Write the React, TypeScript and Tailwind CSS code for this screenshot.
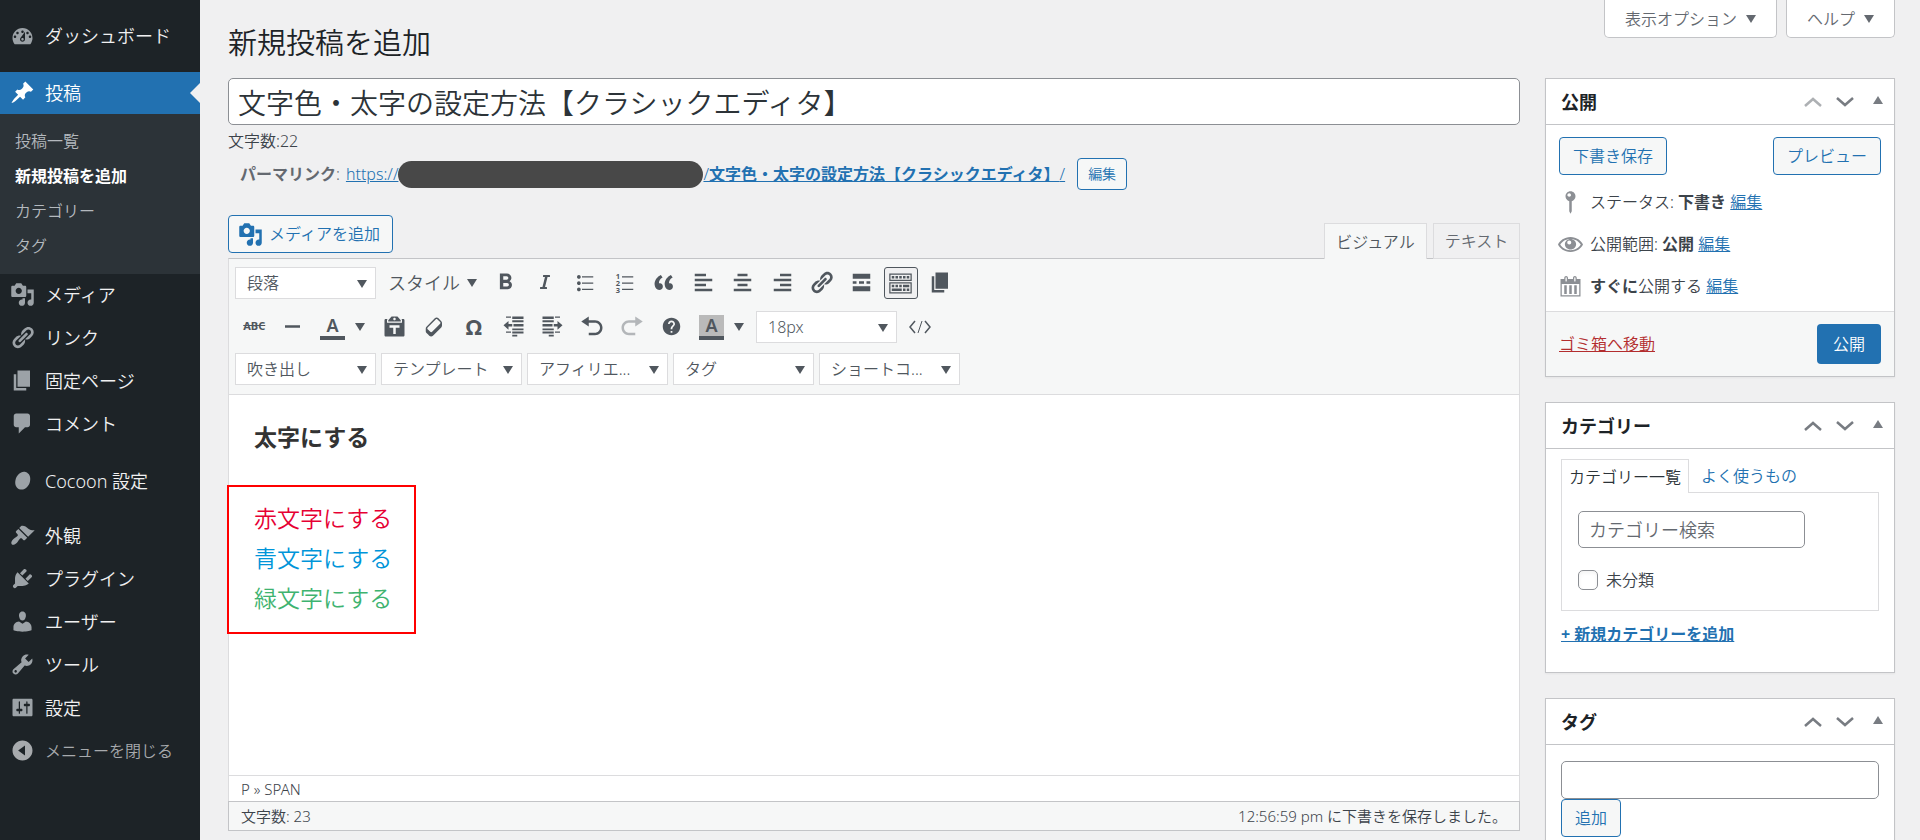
import type { ReactNode } from "react"
import { MdFormatBold, MdHelp } from "react-icons/md"
import { FaItalic } from "react-icons/fa"

const paths = {
    dashboard: "M3.76 17h12.48c1.09-1.36 1.76-3.11 1.76-5 0-4.42-3.58-8-8-8s-8 3.58-8 8c0 1.89.67 3.64 1.76 5zM10 6c.55 0 1 .45 1 1s-.45 1-1 1-1-.45-1-1 .45-1 1-1zM6 7c.55 0 1 .45 1 1s-.45 1-1 1-1-.45-1-1 .45-1 1-1zm8 0c.55 0 1 .45 1 1s-.45 1-1 1-1-.45-1-1 .45-1 1-1zm-5.37 4.55L12 7v6c0 1.1-.9 2-2 2s-2-.9-2-2c0-.57.24-1.08.63-1.45zM4 10c.55 0 1 .45 1 1s-.45 1-1 1-1-.45-1-1 .45-1 1-1zm12 0c.55 0 1 .45 1 1s-.45 1-1 1-1-.45-1-1 .45-1 1-1zm-5 3c0-.55-.45-1-1-1s-1 .45-1 1 .45 1 1 1 1-.45 1-1z",
    pin: "M10.44 3.02l1.82-1.82 6.36 6.35-1.83 1.82c-1.05-.68-2.48-.57-3.41.36l-.75.75c-.92.93-1.04 2.35-.35 3.41l-1.83 1.82-2.41-2.41-2.8 2.79c-.42.42-3.38 2.71-3.8 2.29s1.86-3.39 2.28-3.81l2.79-2.79L4.1 9.36l1.83-1.82c1.05.69 2.48.57 3.4-.36l.75-.75c.93-.92 1.05-2.35.36-3.41z",
    media: "M13 11V4c0-.55-.45-1-1-1h-1.67L9 1H5L3.67 3H2c-.55 0-1 .45-1 1v7c0 .55.45 1 1 1h10c.55 0 1-.45 1-1zM7 4.5c1.38 0 2.5 1.12 2.5 2.5S8.38 9.5 7 9.5 4.5 8.38 4.5 7 5.62 4.5 7 4.5zM14 6h5v10.5c0 1.38-1.12 2.5-2.5 2.5S14 17.88 14 16.5s1.12-2.5 2.5-2.5c.17 0 .34.02.5.05V9h-3V6zm-4 8.05V13h2v3.5c0 1.38-1.12 2.5-2.5 2.5S7 17.88 7 16.5 8.12 14 9.5 14c.17 0 .34.02.5.05z",
    link: "M17.74 2.76c1.68 1.69 1.68 4.41 0 6.1l-1.53 1.52c-1.12 1.12-2.7 1.47-4.14 1.09l2.62-2.61.76-.77.76-.76c.84-.84.84-2.2 0-3.04-.84-.85-2.2-.85-3.04 0l-.77.76-3.38 3.38c-.37-1.44-.02-3.02 1.1-4.14l1.52-1.53c1.69-1.68 4.42-1.68 6.1 0zM8.59 13.43l5.34-5.34c.42-.42.42-1.1 0-1.52-.44-.43-1.13-.39-1.53 0l-5.33 5.34c-.42.42-.42 1.1 0 1.52.44.43 1.13.39 1.52 0zm-.76 2.29l4.14-4.15c.38 1.44.03 3.02-1.09 4.14l-1.52 1.53c-1.69 1.68-4.41 1.68-6.1 0-1.68-1.68-1.68-4.42 0-6.1l1.53-1.52c1.12-1.12 2.7-1.47 4.14-1.1l-4.14 4.15c-.85.84-.85 2.2 0 3.05.84.84 2.2.84 3.04 0z",
    page: "M6 15V2h10v13H6zm-1 1h8v2H3V5h2v11z",
    comment: "M5 2h9c1.1 0 2 .9 2 2v7c0 1.1-.9 2-2 2h-2l-5 5v-5H5c-1.1 0-2-.9-2-2V4c0-1.1.9-2 2-2z",
    cocoon: "M12.5 3.2c3 1 4.3 4 3.5 7.5-.9 4-4.1 7.1-7.5 6.5-3.3-.6-5-4-4.1-7.7.9-3.9 4.5-7.4 8.1-6.3z",
    appearance: "M14.48 11.06L7.41 3.99l1.5-1.5c.5-.56 2.3-.47 3.51.32 1.21.8 1.43 1.28 2.91 2.1 1.18.64 2.45 1.26 4.45.85zm-.71.71L6.7 4.7 4.93 6.47c-.39.39-.39 1.02 0 1.41l1.06 1.06c.39.39.39 1.03 0 1.42-.6.6-1.43 1.11-2.21 1.69-.35.26-.7.53-1.01.84C1.43 14.23.4 16.08 1.4 17.07c.99 1 2.84-.03 4.18-1.36.31-.31.58-.66.85-1.02.57-.78 1.08-1.61 1.69-2.21.39-.39 1.02-.39 1.41 0l1.06 1.06c.39.39 1.02.39 1.41 0z",
    plugins: "M13.11 4.36L9.87 7.6 8 5.73l3.24-3.24c.35-.34 1.05-.2 1.56.32.52.51.66 1.21.31 1.55zm-8 1.77l.91-1.12 9.01 9.01-1.19.84c-.71.71-2.63 1.16-3.82 1.16H6.14L4.9 17.26c-.59.59-1.54.59-2.12 0-.59-.58-.59-1.53 0-2.12l1.24-1.24v-3.88c0-1.13.4-3.19 1.09-3.89zm7.26 3.97l3.24-3.24c.34-.35 1.04-.21 1.55.31.52.51.66 1.21.31 1.55l-3.24 3.25z",
    users: "M10 9.25c-2.27 0-2.73-3.44-2.73-3.44C7 4.02 7.82 2 9.97 2c2.16 0 2.98 2.02 2.71 3.81 0 0-.41 3.44-2.68 3.44zm0 2.57L12.72 10c2.39 0 4.52 2.33 4.52 4.53v2.49s-3.65 1.13-7.24 1.13c-3.65 0-7.24-1.13-7.24-1.13v-2.49c0-2.25 1.94-4.48 4.47-4.48z",
    tools: "M16.68 9.77c-1.34 1.34-3.3 1.67-4.95.99l-5.41 6.52c-.99.99-2.59.99-3.58 0s-.99-2.59 0-3.57l6.52-5.42c-.68-1.65-.35-3.61.99-4.95 1.28-1.28 3.12-1.62 4.72-1.06l-2.89 2.89 2.82 2.82 2.86-2.87c.53 1.58.18 3.39-1.08 4.65zM3.81 16.21c.4.39 1.04.39 1.43 0 .4-.4.4-1.04 0-1.43-.39-.4-1.03-.4-1.43 0-.39.39-.39 1.03 0 1.43z",
    settings: "M18 16V4c0-.55-.45-1-1-1H3c-.55 0-1 .45-1 1v12c0 .55.45 1 1 1h14c.55 0 1-.45 1-1zM8 11h1c.55 0 1 .45 1 1s-.45 1-1 1H8v1.5c0 .28-.22.5-.5.5s-.5-.22-.5-.5V13H6c-.55 0-1-.45-1-1s.45-1 1-1h1V5.5c0-.28.22-.5.5-.5s.5.22.5.5V11zm5-2h-1c-.55 0-1-.45-1-1s.45-1 1-1h1V5.5c0-.28.22-.5.5-.5s.5.22.5.5V7h1c.55 0 1 .45 1 1s-.45 1-1 1h-1v5.5c0 .28-.22.5-.5.5s-.5-.22-.5-.5V9z",
    collapse: "M10 2c4.42 0 8 3.58 8 8s-3.58 8-8 8-8-3.58-8-8 3.58-8 8-8zM12 6l-5.5 4L12 14z",
    ul: "M5.5 7C4.67 7 4 6.33 4 5.5 4 4.68 4.67 4 5.5 4 6.32 4 7 4.68 7 5.5 7 6.33 6.32 7 5.5 7zM8 5h9v1H8V5zm-2.5 7c-.83 0-1.5-.67-1.5-1.5C4 9.68 4.67 9 5.5 9c.82 0 1.5.68 1.5 1.5 0 .83-.68 1.5-1.5 1.5zM8 10h9v1H8v-1zm-2.5 7c-.83 0-1.5-.67-1.5-1.5 0-.82.67-1.5 1.5-1.5.82 0 1.5.68 1.5 1.5 0 .83-.68 1.5-1.5 1.5zM8 15h9v1H8v-1z",
    quote: "M9.49 13.22c0-.74-.2-1.38-.61-1.9-.62-.78-1.83-.88-2.53-.72-.29-1.65 1.11-3.75 2.92-4.65L7.88 4c-2.73 1.3-5.42 4.28-4.96 8.05C3.21 14.43 4.59 16 6.54 16c.85 0 1.56-.25 2.12-.75s.83-1.18.83-2.03zm8.05 0c0-.74-.2-1.38-.61-1.9-.63-.78-1.83-.88-2.53-.72-.29-1.65 1.11-3.75 2.92-4.65L15.93 4c-2.73 1.3-5.41 4.28-4.95 8.05.29 2.38 1.66 3.95 3.61 3.95.85 0 1.56-.25 2.12-.75s.83-1.18.83-2.03z",
    alignLeft: "M12 5V3H3v2h9zm5 4V7H3v2h14zm-5 4v-2H3v2h9zm5 4v-2H3v2h14z",
    alignCenter: "M14 5V3H6v2h8zm3 4V7H3v2h14zm-3 4v-2H6v2h8zm3 4v-2H3v2h14z",
    alignRight: "M17 5V3H8v2h9zm0 4V7H3v2h14zm0 4v-2H8v2h9zm0 4v-2H3v2h14z",
    more: "M17 7V3H3v4h14zM6 11V9H3v2h3zm6 0V9H8v2h4zm5 0V9h-3v2h3zm0 6v-4H3v4h14z",
    kitchensink: "M19 2v6H1V2h18zm-1 5V3H2v4h16zM5 4v2H3V4h2zm3 0v2H6V4h2zm3 0v2H9V4h2zm3 0v2h-2V4h2zm3 0v2h-2V4h2zm2 5v9H1V9h18zm-1 8v-7H2v7h16zM5 11v2H3v-2h2zm3 0v2H6v-2h2zm3 0v2H9v-2h2zm6 0v2h-5v-2h5zm-6 3v2H3v-2h8zm3 0v2h-2v-2h2zm3 0v2h-2v-2h2z",
    hr: "M4 9h12v2H4z",
    paste: "M12.38 2L15 5v1H5V5l2.64-3h4.74zM10 5c.55 0 1-.44 1-1 0-.55-.45-1-1-1s-1 .45-1 1c0 .56.45 1 1 1zm5.45-1H17c.55 0 1 .45 1 1v12c0 .56-.45 1-1 1H3c-.55 0-1-.44-1-1V5c0-.55.45-1 1-1h1.55L4 4.63V7h12V4.63zM14 11V9H6v2h3v5h2v-5h3z",
    eraser: "M14.29 4.59l1.1 1.11c.41.4.61.94.61 1.47v2.12c0 .53-.2 1.07-.61 1.47l-6.63 6.63c-.4.41-.94.61-1.47.61s-1.07-.2-1.47-.61l-1.11-1.1-1.1-1.11c-.41-.4-.61-.94-.61-1.47v-2.12c0-.54.2-1.07.61-1.48l6.63-6.62c.4-.41.94-.61 1.47-.61s1.06.2 1.47.61zm-6.21 9.7l6.42-6.42c.39-.39.39-1.03 0-1.43L12.36 4.3c-.19-.19-.45-.29-.72-.29s-.52.1-.71.29l-6.42 6.42c-.39.4-.39 1.04 0 1.43l2.14 2.14c.38.38 1.04.38 1.43 0z",
    outdent: "M4 2h4v1H4zM9 2h9v2H9zM9 5h9v1.5H9zM10 8h8v2h-8zM9 11.5h9V13H9zM4 14h4v1H4zM9 14h9v1.5H9zM9 16.5h4V18H9zM6 5.5V8h3v2H6v2.5L2 9z",
    indent: "M12 2h4v1h-4zM2 2h9v2H2zM2 5h9v1.5H2zM2 8h8v2H2zM2 11.5h9V13H2zM12 14h4v1h-4zM2 14h9v1.5H2zM7 16.5h4V18H7zM14 5.5V8h-3v2h3v2.5L18 9z",
    undo: "M12 5H7V2L1 6l6 4V7h5c2.2 0 4 1.8 4 4s-1.8 4-4 4H7v2h5c3.3 0 6-2.7 6-6s-2.7-6-6-6z",
    redo: "M8 5h5V2l6 4-6 4V7H8c-2.2 0-4 1.8-4 4s1.8 4 4 4h5v2H8c-3.3 0-6-2.7-6-6s2.7-6 6-6z",
    status: "M10 1c2.2 0 4 1.8 4 4 0 1.9-1.3 3.4-3 3.9V17l-1 2-1-2V8.9C7.3 8.4 6 6.9 6 5c0-2.2 1.8-4 4-4zM9 2.5C8.2 2.5 7.5 3.2 7.5 4S8.2 5.3 9 5.3 10.4 4.8 10.4 4 9.8 2.5 9 2.5z",
    eye: "M10 4c5 0 8.5 3 10 6-1.5 3-5 6-10 6S1.5 13 0 10c1.5-3 5-6 10-6zM10 5.5c-3.8 0-6.7 1.9-8.2 4.5 1.5 2.6 4.4 4.5 8.2 4.5s6.7-1.9 8.2-4.5C16.7 7.4 13.8 5.5 10 5.5zM10 5.5c2.5 0 4.5 1.9 4.5 4.3S12.5 14 10 14s-4.5-1.9-4.5-4.2 2-4.3 4.5-4.3zM9 6.8c-.9 0-1.6.7-1.6 1.6S8.1 10 9 10s1.6-.7 1.6-1.6S9.9 6.8 9 6.8z",
    calendar: "M15 4h3v14H2V4h3V3c0-.83.67-1.5 1.5-1.5S8 2.17 8 3v1h4V3c0-.83.67-1.5 1.5-1.5S15 2.17 15 3v1zM6 3v2.5c0 .28.22.5.5.5s.5-.22.5-.5V3c0-.28-.22-.5-.5-.5S6 2.72 6 3zm7 0v2.5c0 .28.22.5.5.5s.5-.22.5-.5V3c0-.28-.22-.5-.5-.5s-.5.22-.5.5zm4 14V8H3v9h14zM7 16V9H5v7h2zm4 0V9H9v7h2zm4 0V9h-2v7h2z",
}

type IconName = keyof typeof paths

function Icon({ name }: { name: IconName }) {
    return (
        <svg viewBox="0 0 20 20" className="w-[25px] h-[25px] shrink-0" fill="currentColor" fillRule="evenodd" aria-hidden="true">
            <path d={paths[name]} />
        </svg>
    )
}

function Caret({ className = "" }: { className?: string }) {
    return (
        <svg viewBox="0 0 10 8" className={"w-[10px] h-[8px] shrink-0 " + className} fill="currentColor" aria-hidden="true">
            <path d="M0 0h10L5 8z" />
        </svg>
    )
}

// ---------- Sidebar ----------

function MenuItem({ icon, label }: { icon: IconName; label: string }) {
    return (
        <a href="#" className="flex items-center h-[43px] text-[#f0f0f1] text-[18px]">
            <span className="w-[45px] pb-[2px] flex justify-center text-[#9ca2a7]"><Icon name={icon} /></span>
            {label}
        </a>
    )
}

function Sidebar() {
    return (
        <nav className="w-[200px] shrink-0 bg-[#1d2327] pt-[15px]">
            <MenuItem icon="dashboard" label="ダッシュボード" />
            <a href="#" className="relative mt-[14px] flex items-center h-[42px] bg-[#2271b1] text-white text-[18px]">
                <span className="w-[45px] pb-[2px] flex justify-center"><Icon name="pin" /></span>
                投稿
                <span className="absolute right-0 top-[11px] border-y-[10px] border-y-transparent border-r-[10px] border-r-[#f0f0f1]"></span>
            </a>
            <div className="bg-[#2c3338] py-[10px] pl-[15px] text-base leading-[35px] text-[#b4b9be]">
                <a href="#" className="block">投稿一覧</a>
                <a href="#" className="block font-bold text-white">新規投稿を追加</a>
                <a href="#" className="block">カテゴリー</a>
                <a href="#" className="block">タグ</a>
            </div>
            <MenuItem icon="media" label="メディア" />
            <MenuItem icon="link" label="リンク" />
            <MenuItem icon="page" label="固定ページ" />
            <MenuItem icon="comment" label="コメント" />
            <div className="pt-[14px] pb-3">
                <MenuItem icon="cocoon" label="Cocoon 設定" />
            </div>
            <MenuItem icon="appearance" label="外観" />
            <MenuItem icon="plugins" label="プラグイン" />
            <MenuItem icon="users" label="ユーザー" />
            <MenuItem icon="tools" label="ツール" />
            <MenuItem icon="settings" label="設定" />
            <button className="flex items-center h-[42px] text-base text-[#a7aaad]">
                <span className="w-[45px] pb-[2px] flex justify-center"><Icon name="collapse" /></span>
                メニューを閉じる
            </button>
        </nav>
    )
}

// ---------- Editor ----------

function ToolButton({ label, active, children }: { label: string; active?: boolean; children: ReactNode }) {
    return (
        <button aria-label={label} className={active
            ? "justify-self-center w-[34px] h-8 flex items-center justify-center rounded-[3px] border border-[#50575e] bg-[#f0f0f1]"
            : "justify-self-center w-[34px] h-8 pb-[2px] flex items-center justify-center"}>
            {children}
        </button>
    )
}

function ToolSelect({ label, value }: { label: string; value: string }) {
    return (
        <div className="relative w-[141px]">
            <select aria-label={label} className="appearance-none block w-full h-8 pl-[11px] pr-6 bg-white border border-[#dcdcde] text-base leading-[30px] text-[#50575e]">
                <option>{value}</option>
            </select>
            <Caret className="absolute right-[9px] top-[13px]" />
        </div>
    )
}

function ColorButton({ label, shaded }: { label: string; shaded?: boolean }) {
    return (
        <div className="w-[63px] flex items-center gap-[10px] pl-2">
            <button aria-label={label} className={shaded
                ? "w-[25px] h-[25px] bg-[#bababa] border-b-4 border-[#50575e] text-[18px] leading-[21px] font-semibold"
                : "w-[25px] h-[25px] border-b-4 border-[#50575e] text-[18px] leading-[21px] font-semibold"}>
                A
            </button>
            <Caret />
        </div>
    )
}

function OrderedListIcon() {
    return (
        <svg viewBox="0 0 20 20" className="w-[25px] h-[25px]" fill="currentColor" aria-hidden="true">
            <path d="M8 5h9v1H8zM8 10h9v1H8zM8 15h9v1H8z" />
            <text x="3" y="7" fontSize="6" fontWeight="700">1</text>
            <text x="3" y="12.5" fontSize="6" fontWeight="700">2</text>
            <text x="3" y="18" fontSize="6" fontWeight="700">3</text>
        </svg>
    )
}

function Toolbar() {
    return (
        <div className="bg-[#f6f7f7] border-b border-[#dcdcde] px-[6px] pt-2 pb-[9px] text-[#50575e]">
            <div className="flex items-center">
                <ToolSelect label="段落" value="段落" />
                <button className="flex items-center justify-between w-[89px] ml-3 mr-[9px] text-[18px]">
                    スタイル <Caret />
                </button>
                <div className="grid grid-cols-12 w-[474px]">
                    <ToolButton label="太字"><MdFormatBold className="w-[27px] h-[27px]" /></ToolButton>
                    <ToolButton label="イタリック"><FaItalic className="w-[16px] h-[16px]" /></ToolButton>
                    <ToolButton label="番号なしリスト"><Icon name="ul" /></ToolButton>
                    <ToolButton label="番号付きリスト"><OrderedListIcon /></ToolButton>
                    <ToolButton label="引用"><Icon name="quote" /></ToolButton>
                    <ToolButton label="左寄せ"><Icon name="alignLeft" /></ToolButton>
                    <ToolButton label="中央揃え"><Icon name="alignCenter" /></ToolButton>
                    <ToolButton label="右寄せ"><Icon name="alignRight" /></ToolButton>
                    <ToolButton label="リンク"><Icon name="link" /></ToolButton>
                    <ToolButton label="続きを読む"><Icon name="more" /></ToolButton>
                    <ToolButton label="ツールバー切り替え" active><Icon name="kitchensink" /></ToolButton>
                    <ToolButton label="改ページ"><Icon name="page" /></ToolButton>
                </div>
            </div>
            <div className="flex items-center mt-3">
                <div className="grid grid-cols-2 w-[77px]">
                    <ToolButton label="打ち消し"><span className="text-[11px] font-bold line-through">ABC</span></ToolButton>
                    <ToolButton label="横ライン"><Icon name="hr" /></ToolButton>
                </div>
                <ColorButton label="テキスト色" />
                <div className="grid grid-cols-8 w-[316px]">
                    <ToolButton label="テキストとしてペースト"><Icon name="paste" /></ToolButton>
                    <ToolButton label="書式設定をクリア"><Icon name="eraser" /></ToolButton>
                    <ToolButton label="特殊文字"><span className="text-[22px] font-bold">Ω</span></ToolButton>
                    <ToolButton label="インデントを減らす"><Icon name="outdent" /></ToolButton>
                    <ToolButton label="インデントを増やす"><Icon name="indent" /></ToolButton>
                    <ToolButton label="取り消し"><Icon name="undo" /></ToolButton>
                    <ToolButton label="やり直し"><span className="opacity-40"><Icon name="redo" /></span></ToolButton>
                    <ToolButton label="ヘルプ"><MdHelp className="w-[21px] h-[21px]" /></ToolButton>
                </div>
                <ColorButton label="背景色" shaded />
                <div className="ml-[2px]"><ToolSelect label="フォントサイズ" value="18px" /></div>
                <button aria-label="コード" className="ml-[11px]">
                    <svg viewBox="0 0 24 16" className="w-[24px] h-[16px]" fill="none" stroke="currentColor" aria-hidden="true">
                        <path strokeWidth="1.5" d="M7 2L2 8l5 6M17 2l5 6-5 6" />
                        <path strokeWidth="1" d="M14 2l-4 12" />
                    </svg>
                </button>
            </div>
            <div className="flex gap-[5px] mt-[10px]">
                <ToolSelect label="吹き出し" value="吹き出し" />
                <ToolSelect label="テンプレート" value="テンプレート" />
                <ToolSelect label="アフィリエイト" value="アフィリエ..." />
                <ToolSelect label="タグ挿入" value="タグ" />
                <ToolSelect label="ショートコード" value="ショートコ..." />
            </div>
        </div>
    )
}

function Editor() {
    return (
        <section className="flex-1 min-w-0">
            <input type="text" aria-label="タイトル" defaultValue="文字色・太字の設定方法【クラシックエディタ】"
                className="block w-full h-[47px] px-[9px] bg-white border border-[#8c8f94] rounded-[5px] text-[28px] text-[#2c3338]" />
            <p className="mt-1 leading-6 text-base text-[#3c434a]">文字数:22</p>

            {/* Permalink */}
            <div className="flex items-center mt-[5px] h-8 px-3 text-base leading-6 text-[#646970]">
                <strong className="font-bold">パーマリンク</strong>
                <span className="mr-[6px]">:</span>
                <a href="#" className="flex items-center text-[#2271b1]">
                    <span className="underline">https://</span>
                    <span className="w-[305px] h-[27px] rounded-full bg-[#484848]"></span>
                    <span className="underline">/<b className="font-bold">文字色・太字の設定方法【クラシックエディタ】</b>/</span>
                </a>
                <button className="ml-3 h-8 px-[10px] rounded-[4px] border border-[#2271b1] bg-[#f6f7f7] text-sm text-[#2271b1]">編集</button>
            </div>

            <div className="flex items-end justify-between mt-[25px]">
                <button className="flex items-center gap-[6px] h-[38px] mb-[5px] pl-[9px] pr-3 rounded-[4px] border border-[#2271b1] bg-[#f6f7f7] text-base text-[#2271b1]">
                    <Icon name="media" />
                    メディアを追加
                </button>
                <div className="relative flex gap-[6px] -mb-px text-base text-[#50575e]">
                    <button className="h-9 w-[103px] border border-b-0 border-[#dcdcde] bg-[#f6f7f7]">ビジュアル</button>
                    <button className="h-9 w-[87px] border border-[#dcdcde] bg-[#f0f0f1] text-[#646970]">テキスト</button>
                </div>
            </div>

            <div className="border border-[#dcdcde] border-t-[#c3c4c7] border-b-0 bg-white">
                <Toolbar />
                <div className="min-h-[380px] pl-[25px] pt-[22px] text-[23px] leading-[40px] text-[#333]">
                    <p className="font-bold">太字にする</p>
                    <div className="relative mt-[41px] w-fit">
                        <p className="text-[#e60033]">赤文字にする</p>
                        <p className="text-[#0095d9]">青文字にする</p>
                        <p className="text-[#3eb370]">緑文字にする</p>
                        <div className="absolute -left-[27px] -right-[24px] -top-[13px] -bottom-[16px] border-2 border-[#ff0000]"></div>
                    </div>
                </div>
                <div className="h-[26px] border-t border-[#dcdcde] px-3 leading-[26px] text-[15px] text-[#3c434a]">P » SPAN</div>
            </div>
            <div className="flex justify-between h-[30px] border border-[#c3c4c7] bg-[#f6f7f7] px-3 leading-[28px] text-[15px] text-[#3c434a]">
                <span>文字数: 23</span>
                <span>12:56:59 pm に下書きを保存しました。</span>
            </div>
        </section>
    )
}

// ---------- Meta boxes ----------

function Box({ title, first, children }: { title: string; first?: boolean; children: ReactNode }) {
    return (
        <div className="mb-[25px] bg-white border border-[#c3c4c7] shadow-xs">
            <div className="flex items-center h-[46px] border-b border-[#c3c4c7] pl-[15px] pr-[11px] text-[#787c82]">
                <h2 className="flex-1 pt-[2px] text-[18px] font-bold text-[#1d2327]">{title}</h2>
                <button aria-label="上に移動" className={first ? "w-8 flex justify-center opacity-60" : "w-8 flex justify-center"}>
                    <svg viewBox="0 0 18 10" className="w-[18px] h-[10px]" fill="none" stroke="currentColor" strokeWidth="2.5" aria-hidden="true"><path d="M1 9l8-7 8 7" /></svg>
                </button>
                <button aria-label="下に移動" className="w-8 flex justify-center">
                    <svg viewBox="0 0 18 10" className="w-[18px] h-[10px]" fill="none" stroke="currentColor" strokeWidth="2.5" aria-hidden="true"><path d="M1 1l8 7 8-7" /></svg>
                </button>
                <button aria-label="パネルを閉じる" className="ml-3 pb-[3px]">
                    <Caret className="rotate-180" />
                </button>
            </div>
            {children}
        </div>
    )
}

const secondary = "h-[38px] px-[13px] rounded-[4px] border border-[#2271b1] bg-[#f6f7f7] text-base text-[#2271b1]"

function PublishRow({ icon, children }: { icon: IconName; children: ReactNode }) {
    return (
        <div className="flex items-center h-[42px]">
            <span className="mr-[7px] text-[#8c8f94]"><Icon name={icon} /></span>
            <span>{children} <a href="#" className="text-[#2271b1] underline">編集</a></span>
        </div>
    )
}

function Publish() {
    return (
        <Box title="公開" first>
            <div className="px-3 pt-3 pb-1 text-base text-[#3c434a]">
                <div className="flex justify-between mb-[6px] px-px">
                    <button className={secondary}>下書き保存</button>
                    <button className={secondary}>プレビュー</button>
                </div>
                <PublishRow icon="status">ステータス: <b className="font-bold">下書き</b></PublishRow>
                <PublishRow icon="eye">公開範囲: <b className="font-bold">公開</b></PublishRow>
                <PublishRow icon="calendar"><b className="font-bold">すぐに</b>公開する</PublishRow>
            </div>
            <div className="flex items-center justify-between border-t border-[#dcdcde] bg-[#f6f7f7] px-[13px] py-3 text-base">
                <a href="#" className="text-[#b32d2e] underline">ゴミ箱へ移動</a>
                <button className="h-[40px] px-4 rounded-[4px] bg-[#2271b1] text-white">公開</button>
            </div>
        </Box>
    )
}

function Categories() {
    return (
        <Box title="カテゴリー">
            <div className="px-[15px] pt-[10px] pb-[26px] text-base leading-6">
                <div className="flex relative -mb-px">
                    <button className="h-[34px] px-[7px] border border-b-0 border-[#dcdcde] bg-white text-[#2c3338]">カテゴリー一覧</button>
                    <a href="#" className="px-3 leading-[34px] text-[#2271b1]">よく使うもの</a>
                </div>
                <div className="border border-[#dcdcde] px-4 py-[18px]">
                    <input type="search" aria-label="カテゴリー検索" placeholder="カテゴリー検索"
                        className="block w-[227px] h-[37px] px-[10px] border border-[#8c8f94] rounded-[5px] text-[18px] placeholder:text-[#646970]" />
                    <label className="flex items-center gap-2 mt-5 text-[#3c434a]">
                        <input type="checkbox" className="appearance-none w-5 h-5 rounded-[5px] border border-[#8c8f94] bg-white shadow-inner" />
                        未分類
                    </label>
                </div>
                <a href="#" className="inline-block mt-[11px] font-bold text-[#2271b1] underline">+ 新規カテゴリーを追加</a>
            </div>
        </Box>
    )
}

function Tags() {
    return (
        <Box title="タグ">
            <div className="px-[15px] pt-4 pb-10">
                <input type="text" aria-label="新規タグを追加" className="block w-full h-[38px] px-[10px] border border-[#8c8f94] rounded-[5px] text-base" />
                <button className={secondary}>追加</button>
            </div>
        </Box>
    )
}

export default function App() {
    return (
        <div className="flex h-screen overflow-hidden bg-[#f0f0f1] font-[350] font-['Noto_Sans','Noto_Sans_CJK_JP',sans-serif]">
            <Sidebar />
            <main className="flex-1 min-w-0 pl-[28px] pr-[25px]">
                <header className="flex justify-between items-start h-[78px]">
                    <h1 className="pt-[23px] text-[29px] leading-[40px] text-[#1d2327]">新規投稿を追加</h1>
                    <div className="flex gap-[9px] text-base text-[#646970]">
                        <button className="flex items-center gap-[9px] h-[38px] px-5 bg-white border border-t-0 border-[#c3c4c7] rounded-b-[5px]">
                            表示オプション <Caret />
                        </button>
                        <button className="flex items-center gap-[9px] h-[38px] px-5 bg-white border border-t-0 border-[#c3c4c7] rounded-b-[5px]">
                            ヘルプ <Caret />
                        </button>
                    </div>
                </header>
                <div className="flex items-start gap-[25px]">
                    <Editor />
                    <aside className="w-[350px] shrink-0">
                        <Publish />
                        <Categories />
                        <Tags />
                    </aside>
                </div>
            </main>
        </div>
    )
}
